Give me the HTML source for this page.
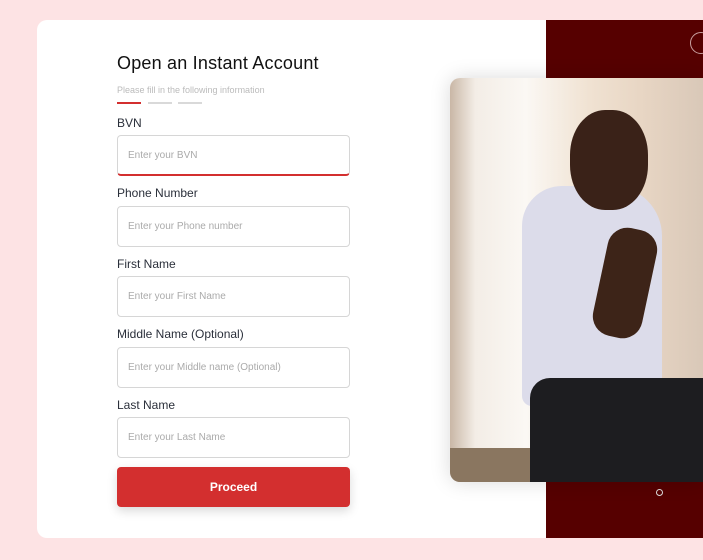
<!DOCTYPE html>
<html><head><style>
*{margin:0;padding:0;box-sizing:border-box}
body{width:703px;height:560px;background:#fde3e4;position:relative;overflow:hidden;font-family:"Liberation Sans",sans-serif}
.card{position:absolute;left:37px;top:20px;width:520px;height:518px;background:#fff;border-radius:10px}
.dark{position:absolute;left:546px;top:20px;width:157px;height:518px;background:#560000}
h1{position:absolute;left:117px;top:53px;font-size:18px;font-weight:normal;color:#111;letter-spacing:0.2px}
.sub{position:absolute;left:117px;top:85px;font-size:9px;color:#bbb}
.bar{position:absolute;top:102px;height:2px;width:24px;background:#d9d9d9}
label{position:absolute;left:117px;font-size:12px;color:#2a2f3a}
.in{position:absolute;left:117px;width:233px;height:41px;border:1px solid #d6d6d6;border-radius:4px;font-size:10px;color:#aaa;padding:14px 0 0 10px}
.btn{position:absolute;left:117px;top:467px;width:233px;height:40px;background:#d32f2f;border-radius:4px;color:#fff;font-size:12px;font-weight:bold;text-align:center;line-height:40px;box-shadow:0 4px 10px rgba(0,0,0,.15)}
.photo{position:absolute;left:450px;top:78px;width:253px;height:404px;border-radius:10px 0 0 10px;overflow:hidden;background:linear-gradient(90deg,#c9b7a6 0,#f3ede6 10%,#fbf8f4 30%,#f0e2d2 55%,#e8d6c4 75%,#d9c8b8 100%);box-shadow:0 0 20px rgba(0,0,0,.15)}
</style></head><body>
<div class="card"></div>
<div class="dark"></div>
<div style="position:absolute;left:690px;top:32px;width:22px;height:22px;border:1px solid #c9a0a0;border-radius:50%"></div>
<div style="position:absolute;left:656px;top:489px;width:7px;height:7px;border:1px solid #ddd;border-radius:50%"></div>
<h1>Open an Instant Account</h1>
<div class="sub">Please fill in the following information</div>
<div class="bar" style="left:117px;background:#d32f2f"></div>
<div class="bar" style="left:148px"></div>
<div class="bar" style="left:178px"></div>
<label style="top:116px">BVN</label>
<div class="in" style="top:135px;border-bottom:2px solid #d32f2f">Enter your BVN</div>
<label style="top:186px">Phone Number</label>
<div class="in" style="top:206px">Enter your Phone number</div>
<label style="top:257px">First Name</label>
<div class="in" style="top:276px">Enter your First Name</div>
<label style="top:327px">Middle Name (Optional)</label>
<div class="in" style="top:347px">Enter your Middle name (Optional)</div>
<label style="top:398px">Last Name</label>
<div class="in" style="top:417px">Enter your Last Name</div>
<div class="btn">Proceed</div>
<div class="photo">
<div style="position:absolute;left:0;top:370px;width:253px;height:40px;background:#8a7660"></div>
<div style="position:absolute;left:72px;top:108px;width:140px;height:220px;background:#dcdcea;border-radius:40px 50px 10px 10px"></div>
<div style="position:absolute;left:80px;top:300px;width:173px;height:110px;background:#1d1d20;border-radius:20px 0 0 0"></div>
<div style="position:absolute;left:120px;top:32px;width:78px;height:100px;background:#3a2218;border-radius:45% 45% 45% 45%"></div>
<div style="position:absolute;left:150px;top:150px;width:50px;height:110px;background:#3d2418;border-radius:20px;transform:rotate(12deg)"></div>
</div>
</body></html>
